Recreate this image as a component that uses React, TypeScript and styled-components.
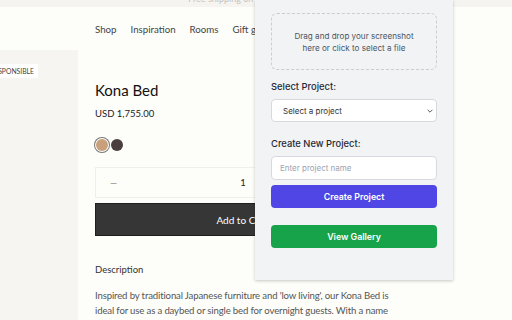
import React from 'react'
import styled, { createGlobalStyle } from 'styled-components'

const GlobalStyle = createGlobalStyle`
  html, body {
    margin: 0;
    padding: 0;
    background: #fdfdf9;
    overflow: hidden;
  }
  * {
    box-sizing: border-box;
  }
`

const NAV_ITEMS = ['Shop', 'Inspiration', 'Rooms', 'Gift guide', 'Journal']
const SWATCHES = [
  { color: '#c9a07a', selected: true },
  { color: '#4a3f3d', selected: false },
]

export default function App() {
  return (
    <Page>
      <GlobalStyle />
      <Announcement>
        <span>Free shipping on orders over $500</span>
      </Announcement>
      <Header>
        <Nav>
          {NAV_ITEMS.map((item) => (
            <NavItem key={item}>{item}</NavItem>
          ))}
        </Nav>
      </Header>
      <Main>
        <Gallery>
          <Badge>RESPONSIBLE</Badge>
        </Gallery>
        <Details>
          <Title>Kona Bed</Title>
          <Price>USD 1,755.00</Price>
          <Swatches>
            {SWATCHES.map((s) => (
              <Swatch key={s.color} $color={s.color} $selected={s.selected} />
            ))}
          </Swatches>
          <Quantity>
            <QtyButton>—</QtyButton>
            <QtyValue>1</QtyValue>
            <QtyButton>+</QtyButton>
          </Quantity>
          <AddToCart>Add to Cart</AddToCart>
          <SectionTitle>Description</SectionTitle>
          <Paragraph>
            Inspired by traditional Japanese furniture and 'low living', our Kona Bed is
            ideal for use as a daybed or single bed for overnight guests. With a name
            inspired by the Hawaiian coast, its low profile frame is crafted from solid timber.
          </Paragraph>
        </Details>
      </Main>

      <Popup>
        <DropZone>
          Drag and drop your screenshot
          <br />
          here or click to select a file
        </DropZone>
        <Label>Select Project:</Label>
        <Select>
          <span>Select a project</span>
          <svg width="8" height="8" viewBox="0 0 10 10">
            <path d="M2 3.5 L5 6.5 L8 3.5" fill="none" stroke="#555" strokeWidth="1.2" />
          </svg>
        </Select>
        <Label $gap={16}>Create New Project:</Label>
        <TextInput placeholder="Enter project name" />
        <Button $bg="#4f46e5">Create Project</Button>
        <Button $bg="#16a34a" $gap={17}>
          View Gallery
        </Button>
      </Popup>
    </Page>
  )
}

const Page = styled.div`
  position: relative;
  width: 512px;
  height: 320px;
  overflow: hidden;
  font-family: Lato, 'Liberation Sans', sans-serif;
  color: #222;
`

const Announcement = styled.div`
  height: 7px;
  background: #f5f4f0;
  display: flex;
  justify-content: center;
  align-items: flex-end;
  overflow: hidden;

  span {
    font-size: 9px;
    line-height: 9px;
    margin-bottom: 4px;
    color: #c4c4c0;
    white-space: nowrap;
  }
`

const Header = styled.div`
  height: 43px;
  padding-left: 95px;
  display: flex;
  align-items: center;
`

const Nav = styled.div`
  display: flex;
  gap: 14px;
  white-space: nowrap;
`

const NavItem = styled.span`
  font-size: 9.7px;
  color: #444;
`

const Main = styled.div`
  display: flex;
  height: 270px;
`

const Gallery = styled.div`
  width: 78px;
  flex-shrink: 0;
  background: #f6f5f1;
  padding-top: 14px;
  display: flex;
  flex-direction: column;
  align-items: flex-start;
  overflow: hidden;
`

const Badge = styled.div`
  background: #fff;
  font-size: 6.8px;
  line-height: 14px;
  padding: 0 4px;
  margin-left: -14px;
  color: #444;
`

const Details = styled.div`
  width: 294px;
  margin-left: 17px;
  padding-top: 31px;
  display: flex;
  flex-direction: column;

  & > * {
    flex-shrink: 0;
  }
`

const Title = styled.div`
  font-size: 15px;
  font-weight: 400;
  line-height: 18px;
  color: #111;
`

const Price = styled.div`
  margin-top: 9px;
  font-size: 9.5px;
  line-height: 12px;
  color: #222;
`

const Swatches = styled.div`
  margin-top: 19px;
  display: flex;
  gap: 3px;
`

const Swatch = styled.span<{ $color: string; $selected: boolean }>`
  width: 12px;
  height: 12px;
  border-radius: 50%;
  background: ${(p) => p.$color};
  box-shadow: ${(p) => (p.$selected ? '0 0 0 1px #fdfdf9, 0 0 0 2px #777' : 'none')};
  margin-left: ${(p) => (p.$selected ? '1px' : '0')};
`

const Quantity = styled.div`
  margin-top: 16px;
  height: 31px;
  border: 1px solid #f0efea;
  display: flex;
  align-items: center;
  justify-content: space-between;
  padding: 0 14px;
`

const QtyButton = styled.span`
  font-size: 9px;
  color: #888;
`

const QtyValue = styled.span`
  font-size: 9.5px;
  color: #222;
`

const AddToCart = styled.div`
  margin-top: 5px;
  height: 33px;
  background: #363636;
  border: 1px solid #1f1f1f;
  color: #fff;
  font-size: 10px;
  font-weight: 400;
  display: flex;
  align-items: center;
  justify-content: center;
`

const SectionTitle = styled.div`
  margin-top: 28px;
  font-size: 9.5px;
  line-height: 12px;
  color: #333;
`

const Paragraph = styled.p`
  margin: 12px 0 0;
  font-size: 9.6px;
  line-height: 15px;
  color: #555;
  letter-spacing: -0.15px;
`

const Popup = styled.div`
  position: absolute;
  left: 255px;
  top: 0;
  width: 198px;
  height: 280px;
  background: #f2f3f5;
  box-shadow: 0 1px 3px rgba(0, 0, 0, 0.22);
  padding: 13px 16px 0;
  display: flex;
  flex-direction: column;
  font-family: Inter, 'Liberation Sans', sans-serif;
`

const DropZone = styled.div`
  height: 57px;
  border: 1px dashed #cbcdd1;
  border-radius: 6px;
  display: flex;
  flex-direction: column;
  align-items: center;
  justify-content: center;
  text-align: center;
  font-size: 8.1px;
  line-height: 12px;
  color: #4b5563;
`

const Label = styled.div<{ $gap?: number }>`
  margin-top: ${(p) => p.$gap ?? 11}px;
  font-size: 9.4px;
  font-weight: 500;
  line-height: 12px;
  color: #1f2937;
`

const Select = styled.div`
  margin-top: 6px;
  height: 23px;
  background: #fff;
  border: 1px solid #d6d9de;
  border-radius: 4px;
  display: flex;
  align-items: center;
  justify-content: space-between;
  padding: 0 2px 0 11px;
  font-size: 8px;
  color: #333;
`

const TextInput = styled.input`
  margin-top: 6px;
  height: 24px;
  background: #fff;
  border: 1px solid #d6d9de;
  border-radius: 4px;
  padding: 0 8px;
  font-family: Inter, 'Liberation Sans', sans-serif;
  font-size: 8px;
  outline: none;

  &::placeholder {
    color: #9ca3af;
  }
`

const Button = styled.div<{ $bg: string; $gap?: number }>`
  margin-top: ${(p) => p.$gap ?? 5}px;
  height: 23px;
  background: ${(p) => p.$bg};
  border-radius: 4px;
  color: #fff;
  font-size: 8.8px;
  font-weight: 600;
  display: flex;
  align-items: center;
  justify-content: center;
`
